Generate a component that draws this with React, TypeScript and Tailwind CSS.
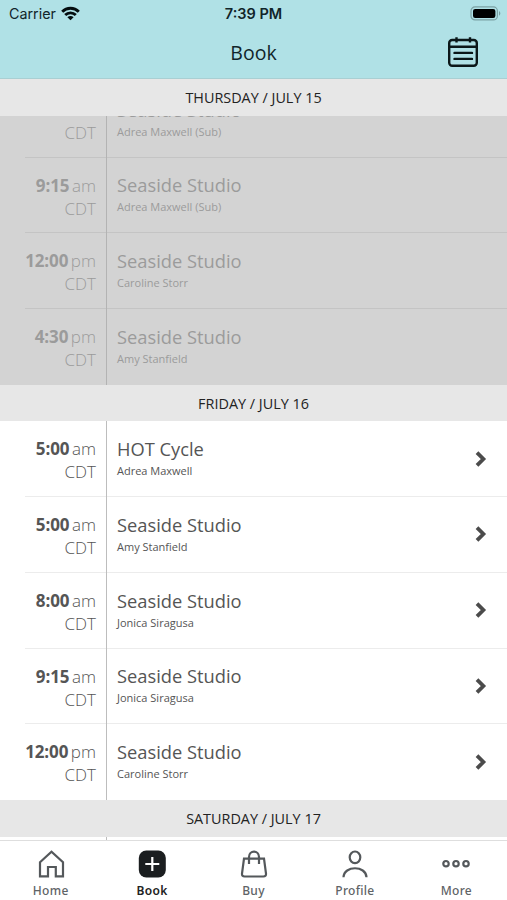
import { ReactNode } from "react";

type ClassItem = { id: number; time: string; period: string; name: string; coach: string };

const thursday: ClassItem[] = [
  { id: 1, time: "8:00", period: "am", name: "Seaside Studio", coach: "Adrea Maxwell (Sub)" },
  { id: 2, time: "9:15", period: "am", name: "Seaside Studio", coach: "Adrea Maxwell (Sub)" },
  { id: 3, time: "12:00", period: "pm", name: "Seaside Studio", coach: "Caroline Storr" },
  { id: 4, time: "4:30", period: "pm", name: "Seaside Studio", coach: "Amy Stanfield" },
];

const friday: ClassItem[] = [
  { id: 5, time: "5:00", period: "am", name: "HOT Cycle", coach: "Adrea Maxwell" },
  { id: 6, time: "5:00", period: "am", name: "Seaside Studio", coach: "Amy Stanfield" },
  { id: 7, time: "8:00", period: "am", name: "Seaside Studio", coach: "Jonica Siragusa" },
  { id: 8, time: "9:15", period: "am", name: "Seaside Studio", coach: "Jonica Siragusa" },
  { id: 9, time: "12:00", period: "pm", name: "Seaside Studio", coach: "Caroline Storr" },
];

const StatusBar = () => (
  <div className="h-[27px] flex items-center pl-[9px] pr-[6px] font-['Inter',sans-serif] text-[#10252a]">
    <div className="flex-1 flex items-center gap-[5px]">
      <span className="text-[14.3px]">Carrier</span>
      <svg width="19" height="15" viewBox="0 0 19 15" fill="none" stroke="#050d0f" strokeWidth="2.9">
        <path d="M1.2 5.7C5.8 1.1 13.2 1.1 17.8 5.7" />
        <path d="M4.2 9C7.2 6.1 11.8 6.1 14.8 9" />
        <path d="M6.4 11.2C8.2 9.6 10.8 9.6 12.6 11.2L9.5 14.2Z" fill="#050d0f" stroke="none" />
      </svg>
    </div>
    <span className="text-[14.5px] font-semibold mr-[3px]">7:39 PM</span>
    <div className="flex-1 flex justify-end">
      <svg width="31" height="15" viewBox="0 0 31 15" fill="none">
        <rect x="1" y="0.9" width="26.4" height="13" rx="4" stroke="#7ba1a4" strokeWidth="1.2" />
        <rect x="3" y="2.9" width="22.4" height="9" rx="2.2" fill="#000" />
        <path d="M29 5C30.8 6 30.8 8.8 29 9.8Z" fill="#7ba1a4" />
      </svg>
    </div>
  </div>
);

const DayHeader = ({ children }: { children: ReactNode }) => (
  <div className="h-[36.5px] shrink-0 bg-[#e7e7e7] flex items-center justify-center pt-px text-[14.4px] text-[#222]">
    {children}
  </div>
);

const ClassRow = ({ item, past }: { item: ClassItem; past?: boolean }) => (
  <div className={`group h-[75.75px] shrink-0 flex ${past ? "text-[#9b9b9b]" : "text-[#555]"}`}>
    <div
      className={`w-[107px] border-r flex justify-end ${past ? "border-[#b3b3b3]" : "border-[#bdbdbd]"}`}
    >
      <div
        className={`w-[81px] h-full border-b group-last:border-b-0 pr-[10px] pt-[16px] text-right text-[17px] leading-[23px] ${past ? "border-[#c4c4c4]" : "border-[#ececec]"}`}
      >
        <div className="flex justify-end gap-[2.5px]">
          <span className="font-bold tracking-[-0.1px]">{item.time}</span>
          <span className="font-light">{item.period}</span>
        </div>
        <div className="font-light">CDT</div>
      </div>
    </div>
    <div
      className={`flex-1 border-b group-last:border-b-0 flex justify-between pl-[10px] pr-[20px] ${past ? "border-[#c4c4c4]" : "border-[#ececec]"}`}
    >
      <div className="pt-[14.8px]">
        <div className="text-[18.3px] leading-[25px]">{item.name}</div>
        <div className="pt-px text-[11px] leading-[18px]">{item.coach}</div>
      </div>
      {!past && (
        <svg
          className="self-center"
          width="13"
          height="18"
          viewBox="0 0 13 18"
          fill="none"
          stroke="#4b4b4b"
          strokeWidth="3.8"
        >
          <path d="M3 2.6L9.4 9L3 15.4" />
        </svg>
      )}
    </div>
  </div>
);

const tabs = [
  {
    label: "Home",
    icon: <path d="M3 12.3L14.5 1.8L26 12.3V26.4H18.8V17H11V26.4H3Z" />,
  },
  {
    label: "Book",
    active: true,
    icon: (
      <>
        <rect x="0.8" y="0.5" width="27" height="27" rx="7.5" fill="#1b1e20" stroke="none" />
        <path d="M14.3 7V21M7.3 14H21.3" stroke="#fff" />
      </>
    ),
  },
  {
    label: "Buy",
    icon: (
      <>
        <path d="M4 8.7H24L26 23.5Q26.2 26.5 23.4 26.5H4.6Q1.8 26.5 2 23.5Z" />
        <path d="M9 14V7C9 -0.2 19 -0.2 19 7V14" />
      </>
    ),
  },
  {
    label: "Profile",
    icon: (
      <>
        <ellipse cx="14" cy="7.3" rx="5.3" ry="5.8" />
        <path d="M2.5 27.3C3 15.2 25 15.2 25.5 27.3" />
      </>
    ),
  },
  {
    label: "More",
    icon: (
      <>
        <circle cx="4" cy="13.7" r="2.7" />
        <circle cx="14" cy="13.7" r="2.7" />
        <circle cx="24" cy="13.7" r="2.7" />
      </>
    ),
  },
];

const App = () => {
  return (
    <div className="w-full h-screen flex flex-col overflow-hidden bg-white font-['Open_Sans',sans-serif]">
      <header className="h-[79px] shrink-0 bg-[#b0e1e6] border-b border-[#a9cfd3]">
        <StatusBar />
        <div className="h-[50px] flex items-center px-7">
          <div className="flex-1" />
          <h1 className="pt-px text-[19.5px] text-[#10252a]">Book</h1>
          <div className="flex-1 flex justify-end">
            <svg width="32" height="32" viewBox="0 0 32 32" fill="none" stroke="#0b1719" strokeWidth="2.4">
              <rect x="2.2" y="4" width="27.6" height="25.7" rx="3" />
              <path d="M2 10.7H30M9.5 1.2V6.5M23 1.2V6.5" />
              <path d="M7.5 16.9H25M7.5 22.9H25" strokeLinecap="round" />
            </svg>
          </div>
        </div>
      </header>

      {/* Schedule */}
      <main className="flex-1 min-h-0 overflow-hidden flex flex-col">
        <DayHeader>THURSDAY / JULY 15</DayHeader>
        <div className="h-[269.25px] shrink-0 bg-[#d3d3d3] overflow-hidden flex flex-col justify-end">
          {thursday.map((item) => (
            <ClassRow key={item.id} item={item} past />
          ))}
        </div>
        <DayHeader>FRIDAY / JULY 16</DayHeader>
        <div className="shrink-0">
          {friday.map((item) => (
            <ClassRow key={item.id} item={item} />
          ))}
        </div>
        <DayHeader>SATURDAY / JULY 17</DayHeader>
        <div className="w-[107px] flex-1 border-r border-[#bdbdbd]" />
      </main>

      {/* Bottom tabs */}
      <nav className="h-[60px] shrink-0 border-t border-[#dedede] flex">
        {tabs.map((tab) => (
          <button
            key={tab.label}
            className={`flex-1 flex flex-col items-center pt-[8.5px] font-['Noto_Sans',sans-serif] text-[12px] leading-[17px] tracking-[0.3px] ${tab.active ? "font-semibold text-[#222]" : "font-medium text-[#606366]"}`}
          >
            <svg width="28" height="28" viewBox="0 0 28 28" fill="none" stroke="#54585b" strokeWidth="2.2">
              {tab.icon}
            </svg>
            <span className="mt-[4.5px]">{tab.label}</span>
          </button>
        ))}
      </nav>
    </div>
  );
};

export default App;
